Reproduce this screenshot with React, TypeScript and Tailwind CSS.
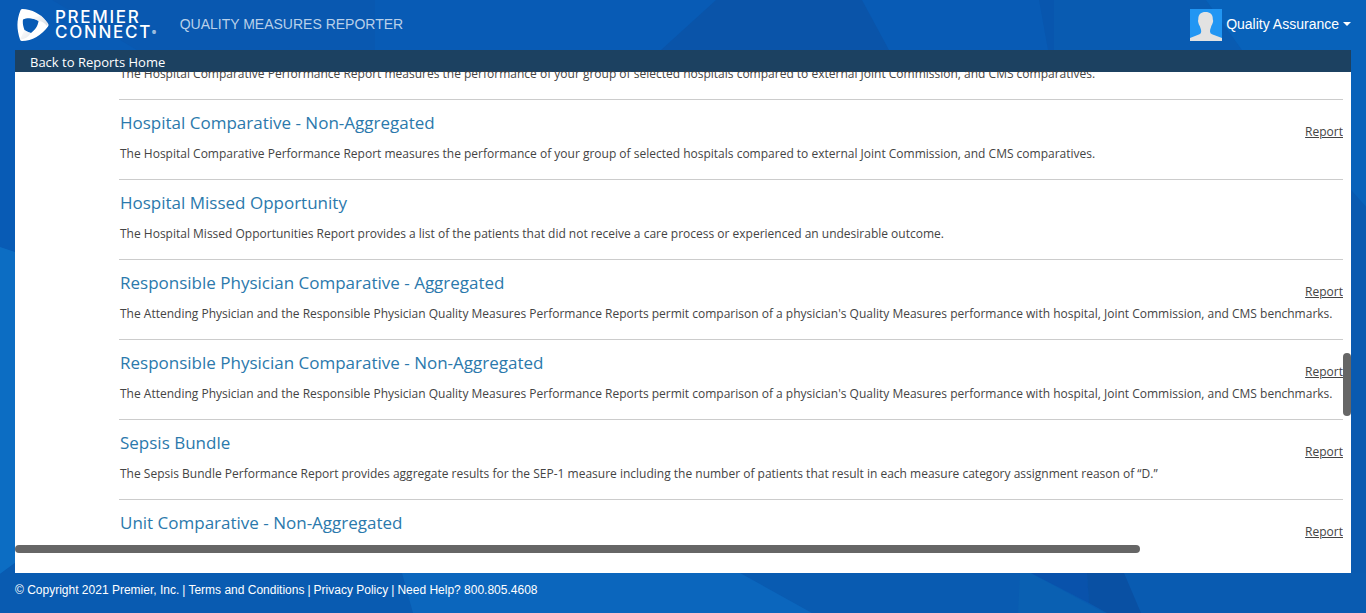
type ReportItem = { title: string; description: string; hasReport: boolean };

const comparative =
  'The Hospital Comparative Performance Report measures the performance of your group of selected hospitals compared to external Joint Commission, and CMS comparatives.';
const physician =
  "The Attending Physician and the Responsible Physician Quality Measures Performance Reports permit comparison of a physician's Quality Measures performance with hospital, Joint Commission, and CMS benchmarks.";

const reports: ReportItem[] = [
  { title: 'Hospital Comparative - Aggregated', description: comparative, hasReport: true },
  { title: 'Hospital Comparative - Non-Aggregated', description: comparative, hasReport: true },
  {
    title: 'Hospital Missed Opportunity',
    description:
      'The Hospital Missed Opportunities Report provides a list of the patients that did not receive a care process or experienced an undesirable outcome.',
    hasReport: false,
  },
  { title: 'Responsible Physician Comparative - Aggregated', description: physician, hasReport: true },
  { title: 'Responsible Physician Comparative - Non-Aggregated', description: physician, hasReport: true },
  {
    title: 'Sepsis Bundle',
    description:
      'The Sepsis Bundle Performance Report provides aggregate results for the SEP-1 measure including the number of patients that result in each measure category assignment reason of “D.”',
    hasReport: true,
  },
  { title: 'Unit Comparative - Non-Aggregated', description: '', hasReport: true },
];

function Backdrop() {
  return (
    <svg
      className="absolute inset-0 -z-10 h-full w-full"
      viewBox="0 0 1366 613"
      preserveAspectRatio="none"
      aria-hidden="true"
    >
      <rect width="1366" height="613" fill="#085bb5" />
      <path d="M52 0H375V50H137Z" fill="#0958b0" />
      <path d="M716 0H862L889 50H661Z" fill="#0a54a9" />
      <path d="M1039 0H1054V50H1048Z" fill="#0856ae" />
      <path d="M1054 0H1206L1242 50H1054Z" fill="#095bb1" />
      <path d="M1206 0H1366V207L1351 190L1242 50Z" fill="#0862ba" />
      <path d="M1351 190L1366 207V613H1300V190Z" fill="#095ab0" />
      <path d="M0 247L15 252V563L0 574Z" fill="#0c6dc3" />
      <path d="M0 574L15 563V573H1366V613H0Z" fill="#095bb1" />
      <path d="M402 573H740L812 613H413Z" fill="#0b66bd" />
      <path d="M1020 573H1031L1105 613H1018Z" fill="#0a60b2" />
      <path d="M1031 573H1087L1089 603Z" fill="#0952ab" />
      <path d="M1087 573H1124L1141 613H1107L1089 603Z" fill="#0950a3" />
    </svg>
  );
}

function Logo() {
  return (
    <div className="flex items-center gap-1.5 text-white">
      <svg className="h-8 w-8" viewBox="0 0 32 32" aria-hidden="true">
        <defs>
          <linearGradient id="fold" x1="0" y1="0" x2="1" y2="1">
            <stop offset="0" stopColor="#fff" />
            <stop offset="1" stopColor="#c9ced6" />
          </linearGradient>
        </defs>
        <path
          fillRule="evenodd"
          fill="#fff"
          d="M5.500 0C14 0 25 5 31 14.500Q32 16 31 17.500C25 26 15 32 5 32Q3.500 32 3 30.500C-.5 20 -.5 11 3.500 1.200Q4 0 5.500 0ZM6 10.500C10 8.500 16 8.500 21.500 12C21 17 18 21 14 24C11 23 9 22 7.500 21C6 17 5.500 14 6 10.500Z"
        />
        <path d="M14 9.200L24 6.500Q28 10 31 14.500L30 17Q26 12 21.500 12Q17.500 9.500 14 9.200Z" fill="url(#fold)" opacity=".7" />
        <path d="M7.500 21L3 30.500Q10 30 14 24Q10 23 7.500 21Z" fill="url(#fold)" opacity=".5" />
      </svg>
      <div className="flex font-['Inter',sans-serif] text-[17px] leading-[15px] font-medium tracking-widest">
        <span>
          <span className="block">PREMIER</span>
          <span className="block">CONNECT</span>
        </span>
        <span className="self-end text-[6px]">®</span>
      </div>
    </div>
  );
}

export default function App() {
  return (
    <div className="relative isolate flex h-screen flex-col font-['Open_Sans',sans-serif]">
      <Backdrop />
      <header className="flex h-[50px] shrink-0 items-center justify-between pr-[15px] pl-[17px] font-['Liberation_Sans',sans-serif]">
        <div className="flex items-center gap-[22px]">
          <Logo />
          <h1 className="pb-0.5 text-[14px] leading-5 text-[#b8d0ea]">QUALITY MEASURES REPORTER</h1>
        </div>
        <button type="button" className="flex items-center gap-1 text-[14px] leading-5 text-white">
          <svg className="h-8 w-8" viewBox="0 0 32 32" aria-hidden="true">
            <rect width="32" height="32" fill="#2196f3" />
            <path
              d="M15.500 3C20 3 23 5.500 22.800 10C22.800 11 23.500 11.500 23 13C22.500 14.500 22 16 21.300 17C21 19 20 20 20 22.500Q20 24.500 22 25.200L32 29V32H0V29L9.500 25.200Q11.200 24.500 11.200 22.500C11.200 20 10.200 19 9.800 17C9 16 8.500 14.500 8.200 13C7.800 11.500 8.300 11 8.300 10C8.300 5.500 11 3 15.500 3Z"
              fill="#e2e2e2"
            />
          </svg>
          <span className="pb-0.5">Quality Assurance</span>
          <svg className="mb-0.5 h-1 w-2" viewBox="0 0 8 4" aria-hidden="true">
            <path d="M0 0H8L4 4Z" fill="currentColor" />
          </svg>
        </button>
      </header>

      <div className="mx-[15px] flex min-h-0 flex-1 flex-col bg-white">
        <nav className="h-[22px] shrink-0 bg-[#1c4161] px-[15px] pt-[3px]">
          <a href="#home" className="block text-[13px] leading-[19px] text-white">
            Back to Reports Home
          </a>
        </nav>
        <main className="flex min-h-0 flex-1">
          <ul className="-mt-px min-w-0 flex-1 overflow-hidden pl-[104px]">
            {reports.map((report, i) => (
              <li
                key={report.title}
                className={
                  'flex h-20 justify-between border-b border-[#ccc] pt-[11px] pl-px ' + (i === 0 ? '-mt-[51px]' : '')
                }
              >
                <div className="min-w-0">
                  <h2 className="text-[17px] leading-6 whitespace-nowrap text-[#2b79ac]">{report.title}</h2>
                  <p className="pt-[9px] text-[12px] leading-5 whitespace-nowrap text-[#444]">{report.description}</p>
                </div>
                {report.hasReport && (
                  <a href="#report" className="-ml-10 pt-[11px] text-[12px] leading-5 text-[#444] underline">
                    Report
                  </a>
                )}
              </li>
            ))}
          </ul>
          <div className="w-2 shrink-0 pt-[281px]">
            <div className="h-[63px] rounded bg-[#666]" />
          </div>
        </main>
        <div className="mb-5 h-2 w-[84.2%] shrink-0 rounded bg-[#666]" />
      </div>

      <footer className="flex h-10 shrink-0 items-start gap-[3px] px-[15px] pt-2 font-['Liberation_Sans',sans-serif] text-[12px] leading-[18px] text-white">
        <span>© Copyright 2021 Premier, Inc.</span>
        <span>|</span>
        <a href="#terms">Terms and Conditions</a>
        <span>|</span>
        <a href="#privacy">Privacy Policy</a>
        <span>|</span>
        <span>Need Help? 800.805.4608</span>
      </footer>
    </div>
  );
}
